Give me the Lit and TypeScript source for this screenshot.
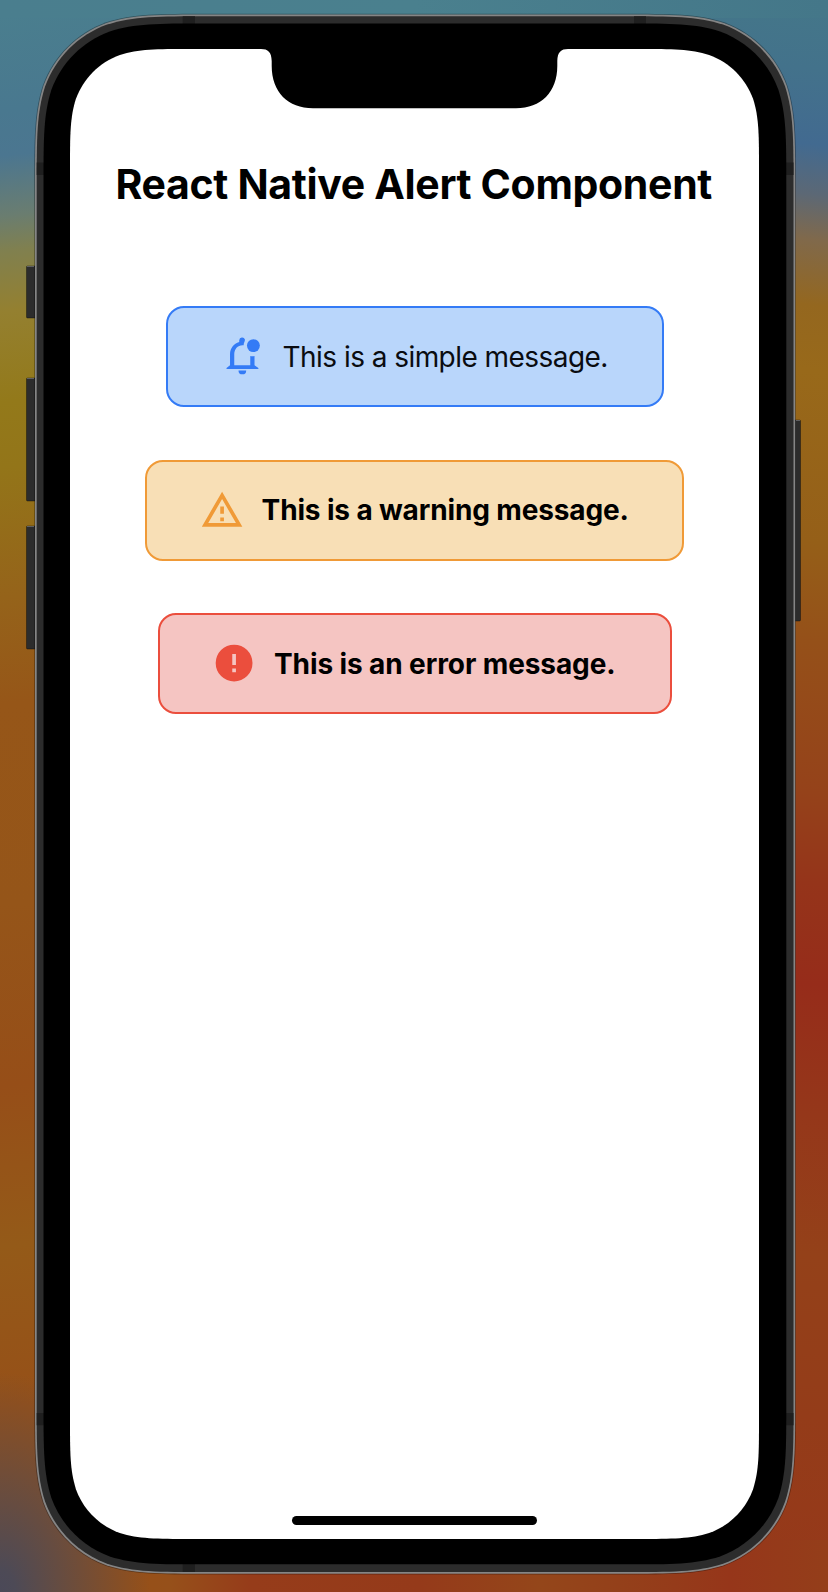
import { LitElement, html, svg, css } from "lit";
import { customElement, property } from "lit/decorators.js";

/** Continuous-curvature rounded rectangle between two corners. */
function squircle(x0: number, y0: number, x1: number, y1: number, r: number): string {
  const curve = [[1.088, 0], [0.868, 0], [0.631, 0.075], [0.372, 0.169], [0.169, 0.372], [0.075, 0.631], [0, 0.868], [0, 1.088], [0, 1.528]];
  const flip = [...curve].reverse().slice(1).concat([[1.528, 0]]);
  const put = (pts: number[][], cx: number, cy: number, sx: number, sy: number) =>
    "C" + pts.map(([a, b]) => `${(cx + sx * a * r).toFixed(2)} ${(cy + sy * b * r).toFixed(2)}`).join(" ");
  const e = 1.528 * r;
  return `M${x0 + e} ${y0}${put(curve, x0, y0, 1, 1)}V${y1 - e}${put(flip, x0, y1, 1, -1)}H${x1 - e}${put(curve, x1, y1, -1, -1)}V${y0 + e}${put(flip, x1, y0, -1, 1)}Z`;
}

const icons = {
  info: svg`<path d="M3 19V18.4L4.9 17V11C4.9 7.7 6.9 5.1 9.9 4.3V3.4A1.6 1.6 0 0 1 13 3C13.1 4 12.3 4.7 12.3 6.1H11.7C9 6.1 7.2 8.2 7.2 11V17H15.9V11.9Q17 12.2 18.2 11.9V17L20.3 18.4V19Z"/><path d="M9.5 19.8H13.7A2.1 2.1 0 0 1 9.5 19.8Z"/><circle cx="17.6" cy="6.3" r="3.5"/>`,
  warning: svg`<path d="M12 2L1 21H23M12 6L19.53 19H4.47M11 10V14H13V10M11 16V18H13V16"/>`,
  error: svg`<path d="M13 13H11V7H13M13 17H11V15H13M12 2A10 10 0 0 0 2 12A10 10 0 0 0 12 22A10 10 0 0 0 22 12A10 10 0 0 0 12 2Z"/>`,
};

@customElement("alert-box")
class AlertBox extends LitElement {
  @property() kind: "info" | "warning" | "error" = "info";
  @property() message = "";

  static styles = css`
    :host { display: block; }
    .box {
      display: flex; align-items: center; gap: 17.4px; box-sizing: border-box; height: 101px;
      padding: 0 52px 0 53px; border: 2px solid; border-radius: 18px;
    }
    .icon { width: 44.2px; height: 44.2px; flex: none; fill: currentColor; fill-rule: evenodd; }
    .text { color: #000; font-size: 28px; line-height: 34px; white-space: nowrap; font-weight: 700; letter-spacing: -0.14px; }
    .info { width: 498px; color: #347bf6; background: #b9d6fb; }
    .info .text { font-weight: 400; color: #0a0c10; letter-spacing: -0.55px; }
    .warning { width: 539px; margin-right: 1px; color: #f09a37; background: #f8dfb6; }
    .error { width: 514px; padding-left: 52.4px; color: #eb4e3d; background: #f5c5c2; }
    .error .text { letter-spacing: -0.1px; }
  `;

  render() {
    return html`<div class="box ${this.kind}" role="alert">
      <svg class="icon" viewBox="0 0 24 24">${icons[this.kind]}</svg>
      <span class="text">${this.message}</span>
    </div>`;
  }
}

@customElement("app-root")
class AppRoot extends LitElement {
  static styles = css`
    :host { display: block; font-family: Inter, "Liberation Sans", sans-serif; }
    .desktop {
      position: relative; box-sizing: border-box; width: 828px; height: 1592px; padding: 49px 69px 53px 70px; overflow: hidden;
      background:
        linear-gradient(90deg, #4a7e8e, #4a808e 50%, #447789) 0 0 / 828px 18px no-repeat,
        radial-gradient(ellipse 150px 220px at 0 1592px, #4b4958 0%, #4d4a56 10%, #4d4a5600 100%),
        linear-gradient(90deg, #96501800 0, #96501a 40px, #963c1a 120px, #953a1a 290px, #94461a 410px, #94401a 490px, #96361a 600px, #943e1a 698px) 130px 1540px / 698px 52px no-repeat,
        linear-gradient(174deg, #4a7f8e 0, #49788f 110px, #4b7690 155px, #6a7d70 215px, #80804f 250px, #948030 310px, #93791a 400px, #937519 465px, #95631a 595px, #965618 700px, #955519 900px, #964e18 1080px, #945a18 1240px, #965018 1400px, #965018 1592px) 0 0 / 414px 1592px no-repeat,
        linear-gradient(186deg, #447789 0, #43728b 70px, #426a90 145px, #5c6875 195px, #80694b 240px, #94671f 305px, #98691a 370px, #955f18 540px, #955019 640px, #95421a 790px, #95341a 880px, #962c1a 980px, #95371a 1110px, #944119 1250px, #943c19 1410px, #96381a 1592px) 414px 0 / 414px 1592px no-repeat;
    }
    .frame { position: absolute; inset: 0; width: 828px; height: 1592px; }
    .screen { position: relative; box-sizing: border-box; height: 1490px; display: flex; flex-direction: column; align-items: center; padding-top: 110px; }
    .title { margin: 0 1.5px 97px 0; font-size: 41px; line-height: 50px; font-weight: 700; letter-spacing: -0.33px; white-space: nowrap; }
    .alerts { display: flex; flex-direction: column; align-items: center; gap: 52.5px; padding-left: 1px; }
    .home { width: 245px; height: 9px; border-radius: 5px; background: #000; margin: auto 0 14px; }
  `;

  render() {
    return html`<main class="desktop">
      <svg class="frame" viewBox="0 0 828 1592">
        <g fill="#2c2c2c" stroke="#000" stroke-opacity=".35">
          <rect x="26.5" y="266" width="12" height="52" rx="1"/>
          <rect x="26.5" y="378" width="12" height="123" rx="1"/>
          <rect x="26.5" y="526" width="12" height="123" rx="1"/>
          <rect x="790" y="420" width="10.5" height="201" rx="1"/>
        </g>
        <path d="M27 266.5h7M27 378.5h7M27 526.5h7M796 420.5h4" stroke="#606062"/>
        <path d=${squircle(34.2, 13.7, 796, 1574.5, 114)} opacity=".35"/>
        <path d=${squircle(35, 14.5, 795.2, 1573.7, 113)} fill="#858585"/>
        <path d=${squircle(36.7, 16.2, 793.5, 1572, 111.6)} fill="#2c2c2c"/>
        <path d="M182.7 16.2h12.3v8h-12.3zM634 16.2h12v8h-12zM182.7 1564h12.3v8h-12.3zM36.7 162.5h8v12.5h-8zM785.5 162.5h8v12.5h-8zM36.7 1413h8v12.3h-8zM785.5 1413h8v12.3h-8z" fill="#1f1f1f"/>
        <path d=${squircle(43.5, 23.5, 786.3, 1564.3, 105)}/>
        <path d=${squircle(70, 49, 759, 1539, 79)} fill="#fff"/>
        <path d="M261 48V49C268 49 271.5 52 271.7 61V66C271.7 92 288 108.3 313 108.3H516C541 108.3 557.3 92 557.3 66V61C557.5 52 561 49 568 49V48Z"/>
      </svg>
      <section class="screen">
        <h1 class="title">React Native Alert Component</h1>
        <div class="alerts">
          <alert-box kind="info" message="This is a simple message."></alert-box>
          <alert-box kind="warning" message="This is a warning message."></alert-box>
          <alert-box kind="error" message="This is an error message."></alert-box>
        </div>
        <div class="home"></div>
      </section>
    </main>`;
  }
}
